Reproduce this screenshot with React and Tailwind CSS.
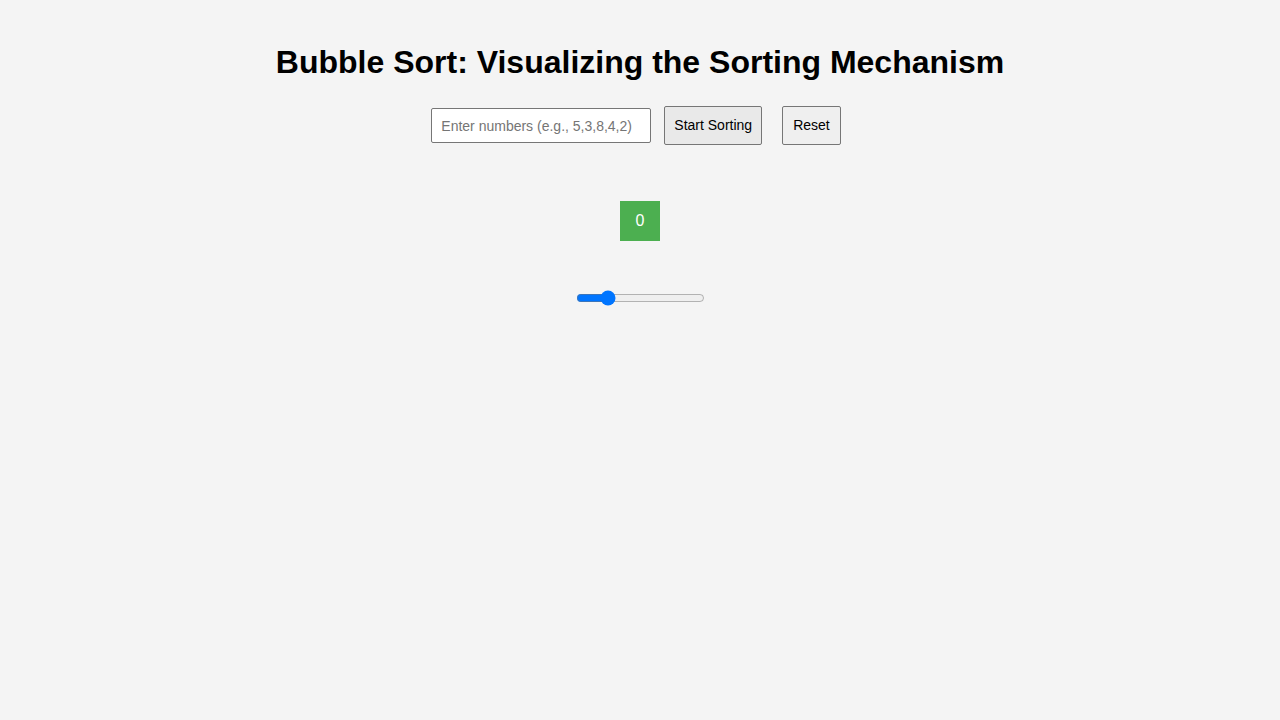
import React, { useState } from "react";

export default function App() {
  const [speed, setSpeed] = useState(22);

  return (
    <div className="min-h-screen w-full bg-[#f4f4f4] flex flex-col items-center font-['Liberation_Sans',Arial,sans-serif] text-black">
      <h1 className="mt-[44px] text-[32px] leading-[37px] font-bold">
        Bubble Sort: Visualizing the Sorting Mechanism
      </h1>

      <div className="mt-[25px] flex items-center ml-[2px]">
        <input
          type="text"
          placeholder="Enter numbers (e.g., 5,3,8,4,2)"
          className="w-[220px] h-[35px] px-[9px] text-[14px] bg-white border border-[#767676] rounded-[2px] placeholder:text-[#757575] outline-none"
        />
        <button className="ml-[13px] h-[39px] px-[9px] text-[14px] bg-[#e9e9e9] border border-[#767676] rounded-[2px]">
          Start Sorting
        </button>
        <button className="ml-[20px] mr-[10px] h-[39px] px-[10px] text-[14px] bg-[#efefef] border border-[#767676] rounded-[2px]">
          Reset
        </button>
      </div>

      <div className="mt-[56px] flex gap-[5px]">
        <div className="w-[40px] h-[40px] bg-[#4caf50] text-white text-[16px] flex items-center justify-center">
          0
        </div>
      </div>

      <input
        type="range"
        min="0"
        max="100"
        value={speed}
        onChange={(e) => setSpeed(Number(e.target.value))}
        className="mt-[49px] w-[129px] accent-[#0075ff]"
      />
    </div>
  );
}
